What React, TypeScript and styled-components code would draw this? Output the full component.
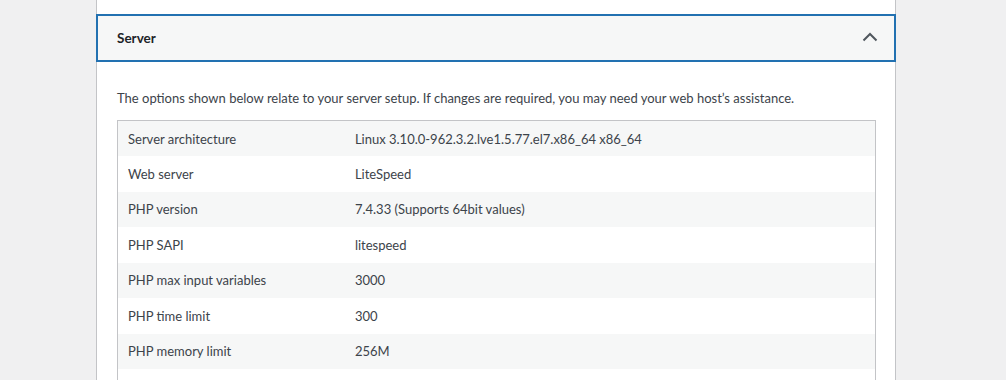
import styled, { createGlobalStyle } from "styled-components";

const GlobalStyle = createGlobalStyle`
  html, body {
    margin: 0;
    padding: 0;
    background: #f0f0f1;
    height: 380px;
    overflow: hidden;
  }
  body {
    font-family: Lato, "Open Sans", sans-serif;
    color: #3c434a;
    font-size: 13px;
  }
`;

const rows: [string, string][] = [
  ["Server architecture", "Linux 3.10.0-962.3.2.lve1.5.77.el7.x86_64 x86_64"],
  ["Web server", "LiteSpeed"],
  ["PHP version", "7.4.33 (Supports 64bit values)"],
  ["PHP SAPI", "litespeed"],
  ["PHP max input variables", "3000"],
  ["PHP time limit", "300"],
  ["PHP memory limit", "256M"],
];

function ChevronUp() {
  return (
    <svg width="16" height="10" viewBox="0 0 16 10" fill="none">
      <path d="M1.5 8.5 L8 2 L14.5 8.5" stroke="#50575e" strokeWidth="2" />
    </svg>
  );
}

function App() {
  return (
    <Page>
      <GlobalStyle />
      <Panel>
        <Header>
          <h3>Server</h3>
          <Toggle aria-expanded="true">
            <ChevronUp />
          </Toggle>
        </Header>
        <Body>
          <p>
            The options shown below relate to your server setup. If changes are required, you may need your web host’s assistance.
          </p>
          <InfoTable>
            <tbody>
              {rows.map(([label, value], i) => (
                <Row key={label} $striped={i % 2 === 0}>
                  <td className="label">{label}</td>
                  <td>{value}</td>
                </Row>
              ))}
              <Row $striped={false}>
                <td className="label" />
                <td />
              </Row>
            </tbody>
          </InfoTable>
        </Body>
      </Panel>
    </Page>
  );
}

const Page = styled.div`
  padding-left: 96px;
  width: 800px;
`;

const Panel = styled.div`
  background: #fff;
  border-left: 1px solid #c3c4c7;
  border-right: 1px solid #c3c4c7;
  padding-top: 14px;
  min-height: 380px;
  box-sizing: border-box;
`;

const Header = styled.div`
  display: flex;
  align-items: center;
  justify-content: space-between;
  height: 48px;
  box-sizing: border-box;
  margin: 0 -1px;
  border: 2px solid #2271b1;
  background: #f6f7f7;
  padding: 0 16px 0 19px;

  h3 {
    margin: 0;
    font-size: 13.5px;
    font-weight: 700;
    color: #1d2327;
  }
`;

const Toggle = styled.span`
  display: flex;
  align-items: center;
  margin-top: -2px;
`;

const Body = styled.div`
  padding: 0 19px 0 20px;

  p {
    margin: 26px 0 0;
    line-height: 20px;
  }
`;

const InfoTable = styled.table`
  margin-top: 12px;
  width: 100%;
  border-collapse: collapse;
  border: 1px solid #c3c4c7;

  td {
    height: 35.5px;
    padding: 0 10px;
    box-sizing: border-box;
    vertical-align: middle;
  }
  td.label {
    width: 30%;
  }
`;

const Row = styled.tr<{ $striped: boolean }>`
  background: ${(p) => (p.$striped ? "#f6f7f7" : "#fff")};
`;

export default App;
